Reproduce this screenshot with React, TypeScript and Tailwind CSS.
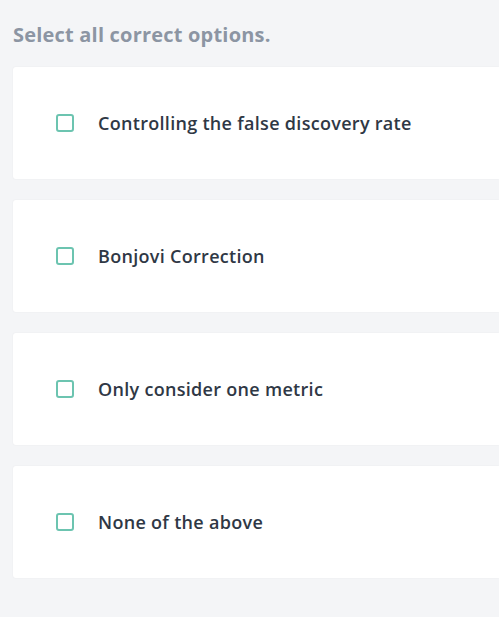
import React from "react";

const options = [
  "Controlling the false discovery rate",
  "Bonjovi Correction",
  "Only consider one metric",
  "None of the above",
];

const App = () => {
  return (
    <div className="min-h-[617px] w-full overflow-hidden bg-[#f4f5f7] pl-[13px] font-['Open_Sans',sans-serif]">
      <h2 className="pt-[22px] text-[20px] font-bold leading-[26px] tracking-[0.2px] text-[#8c95a3]">
        Select all correct options.
      </h2>
      <div className="mt-[19px] flex flex-col gap-[21px]">
        {options.map((opt) => (
          <label
            key={opt}
            className="flex h-[112px] items-center rounded-l-[3px] bg-white pl-[43px] shadow-[0_0_2px_rgba(0,0,0,0.06)]"
          >
            <span className="h-[18px] w-[18px] shrink-0 rounded-[3px] border-2 border-[#6cc4b0]" />
            <span className="ml-[24px] text-[18px] font-semibold tracking-[0.3px] text-[#2f3845]">{opt}</span>
          </label>
        ))}
      </div>
    </div>
  );
};

export default App;
